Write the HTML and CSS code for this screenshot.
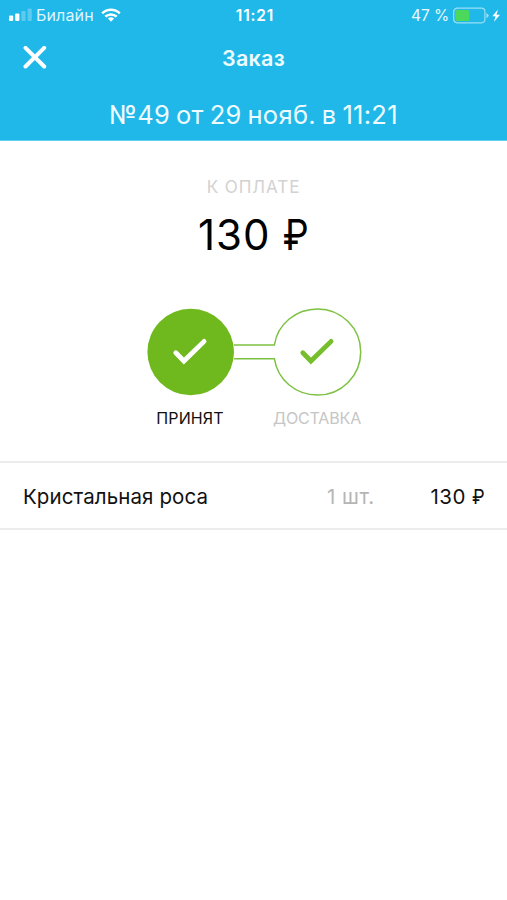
FILE: index.html
```html
<!DOCTYPE html>
<html lang="ru">
<head>
<meta charset="utf-8">
<title>Заказ</title>
<link rel="stylesheet" href="styles.css">
</head>
<body>
<header class="header">
  <div class="status">
    <div class="status-left">
      <svg class="signal" width="24" height="14" viewBox="0 0 24 14"><g fill="#fff"><rect x="0" y="7.5" width="4.2" height="5.5" rx="1"/><rect x="6.2" y="5.5" width="4.2" height="7.5" rx="1"/><g opacity=".27"><rect x="12.4" y="3" width="4.2" height="10" rx="1"/><rect x="18.6" y="0.5" width="4.2" height="12.5" rx="1"/></g></g></svg>
      <span class="carrier">Билайн</span>
      <svg class="wifi" width="20" height="14" viewBox="0 0 20 14"><g fill="none" stroke="#fff" stroke-width="2.5"><path d="M1.2 5.3a12.7 12.7 0 0 1 17.6 0"/><path d="M4.3 8.7a8.2 8.2 0 0 1 11.4 0"/></g><path d="M10 13.7 6.9 10.6a4.5 4.5 0 0 1 6.2 0z" fill="#fff"/></svg>
    </div>
    <span class="time">11:21</span>
    <div class="status-right">
      <span class="percent">47 %</span>
      <svg class="battery" width="48" height="17" viewBox="0 0 48 17"><rect x="0.7" y="1.2" width="31.2" height="14.6" rx="3.5" fill="none" stroke="#fff" stroke-opacity=".55" stroke-width="1.2"/><rect x="2.4" y="3" width="14" height="11" rx="1.5" fill="#4cd95b"/><path d="M33.4 6q2.3 1 2.3 2.5T33.4 11z" fill="#fff" fill-opacity=".55"/><path d="M45 2.5 39.3 9.2h3.2L41 14.8l6-7h-3.5z" fill="#fff"/></svg>
    </div>
  </div>
  <div class="nav">
    <svg class="close" width="24" height="24" viewBox="0 0 24 24"><path d="M2.5 1.8 21.2 20.5M21.2 1.8 2.5 20.5" stroke="#fff" stroke-width="4" stroke-linecap="round"/></svg>
    <h1 class="title">Заказ</h1>
  </div>
  <p class="order">№49 от 29 нояб. в 11:21</p>
</header>
<main>
  <section class="payment">
    <div class="caption">К ОПЛАТЕ</div>
    <div class="total">130 <span class="ruble">₽</span></div>
  </section>
  <section class="progress">
    <svg class="steps" width="216" height="90" viewBox="0 0 216 90">
      <circle cx="44.7" cy="45" r="43.3" fill="#6fb91f"/>
      <g fill="none" stroke="#7cc142" stroke-width="1.5"><path d="M88 38.1h40.4c3-20.8 21.2-36.1 43.3-36.1a43 43 0 1 1 0 86c-22.1 0-40.3-15.3-43.3-36.3H88"/></g>
      <path d="M29.8 45.8 37.9 54 58.1 34.4" fill="none" stroke="#fff" stroke-width="4.8" stroke-linecap="round"/>
      <path d="M156.8 45.8 164.9 54 185.1 34.4" fill="none" stroke="#76be2c" stroke-width="4.8" stroke-linecap="round"/>
    </svg>
    <div class="labels"><span class="label done">ПРИНЯТ</span><span class="label next">ДОСТАВКА</span></div>
  </section>
  <section class="item">
    <span class="name">Кристальная роса</span>
    <span class="qty">1 шт.</span>
    <span class="price">130 <span class="ruble">₽</span></span>
  </section>
</main>
</body>
</html>
```
FILE: styles.css
```css
* { box-sizing: border-box; }
body { margin: 0; background: #fff; color: #111; font-family: Inter, "Liberation Sans", sans-serif; }
svg { display: block; flex: none; }
.header { height: 141px; background: #1fb8e9; color: #fff; border-bottom: 1px solid #5fd0f0; }
.status { height: 30px; display: grid; grid-template-columns: 1fr auto 1fr; align-items: center; padding: 0 6px 0 9px; white-space: nowrap; }
.status-left, .status-right { display: flex; align-items: center; }
.status-right { justify-content: flex-end; }
.carrier { width: 58px; margin: 0 7px 0 3px; font-size: 16px; letter-spacing: .15px; color: #dff6fd; }
.time { font-size: 15.5px; font-weight: 600; letter-spacing: .8px; }
.percent { font-size: 15.5px; letter-spacing: -.1px; margin-right: 4px; color: #e8f9fe; }
.nav { height: 56px; display: grid; grid-template-columns: 1fr auto 1fr; align-items: center; padding: 0 23px; }
.title { margin: 0; font-size: 21.5px; line-height: 56px; font-weight: 600; letter-spacing: .3px; color: #effcff; }
.order { margin: 0; text-align: center; font-size: 25.5px; line-height: 58px; letter-spacing: .3px; word-spacing: -1.6px; color: #effcff; white-space: nowrap; }
.payment { padding-top: 33px; text-align: center; }
.caption { font-size: 17px; line-height: 26px; color: #d2d2d2; letter-spacing: .95px; }
.total { font-size: 42px; line-height: 70px; letter-spacing: .9px; word-spacing: -1.5px; color: #000; }
.total .ruble { display: inline-block; transform: scaleX(.88); margin: 0 -2px 0 -1px; }
.progress { height: 191px; padding: 37px 0 0 146px; }
.labels { display: flex; width: 216px; line-height: 42px; font-size: 16px; white-space: nowrap; }
.label { width: 88px; text-align: center; }
.done { letter-spacing: .1px; }
.next { width: 128px; padding-left: 38px; color: #c6c6c6; letter-spacing: -.15px; }
.item { height: 69px; border: solid #ececec; border-width: 2px 0; display: grid; grid-template-columns: 1fr 58px 100px; align-items: center; padding: 2px 22px 0 23px; font-size: 20.5px; line-height: 26px; white-space: nowrap; }
.name { letter-spacing: .1px; }
.qty { color: #b5b5b5; letter-spacing: .5px; }
.price { text-align: right; letter-spacing: .5px; }
.price .ruble { display: inline-block; transform: scaleX(.88); margin: 0 -1px; }
```
